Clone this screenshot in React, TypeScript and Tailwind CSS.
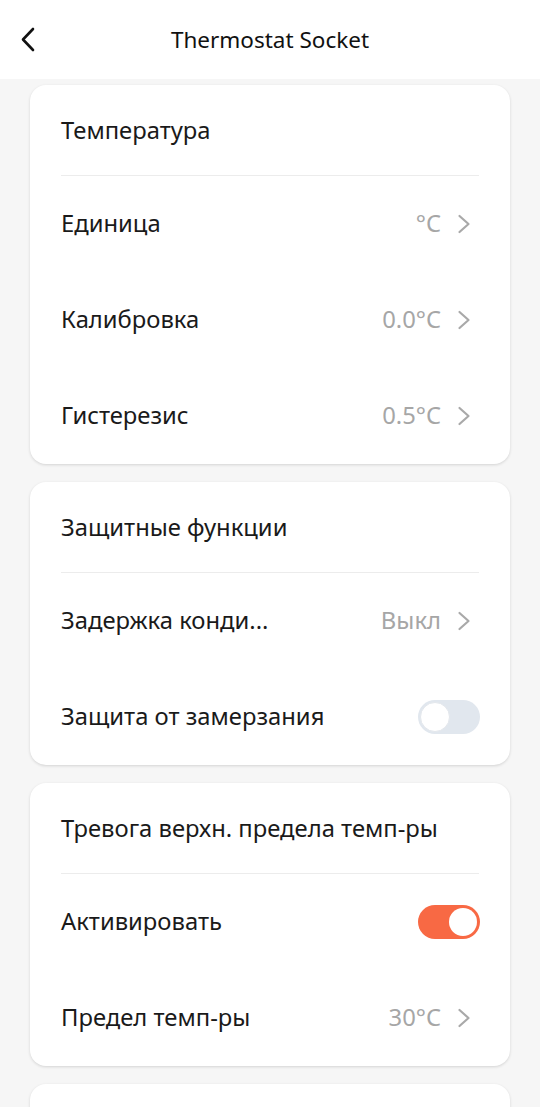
import React from "react";

const font = { fontFamily: '"Noto Sans", "Open Sans", sans-serif' };

function Chevron() {
  return (
    <svg width="14" height="20" viewBox="0 0 14 20" className="ml-[16px] mr-[9px]">
      <path d="M2.5 2 L11.5 10 L2.5 18" fill="none" stroke="#a9a9a9" strokeWidth="2.2" strokeLinecap="round" strokeLinejoin="round" />
    </svg>
  );
}

function Toggle({ on }: { on: boolean }) {
  return on ? (
    <div className="w-[62px] h-[34px] rounded-full bg-[#f86944] flex items-center justify-end pr-[3px]">
      <div className="w-[28px] h-[28px] rounded-full bg-white" />
    </div>
  ) : (
    <div className="w-[62px] h-[34px] rounded-full bg-[#e1e7ee] flex items-center pl-[2px]">
      <div className="w-[30px] h-[30px] rounded-full bg-white border border-[#e3e7ec]" />
    </div>
  );
}

function Title({ children }: { children: React.ReactNode }) {
  return (
    <div className="h-[91px] flex items-center mx-[31px] border-b border-[#ececec] pt-[1px]">
      <span className="text-[23.8px] text-[#1a1a1a] whitespace-nowrap">{children}</span>
    </div>
  );
}

function Row({ label, value, toggle }: { label: string; value?: string; toggle?: boolean }) {
  return (
    <div className="h-[96px] flex items-center justify-between pl-[31px] pr-[30px]">
      <span className="text-[23.8px] text-[#1a1a1a] whitespace-nowrap">{label}</span>
      {toggle === undefined ? (
        <div className="flex items-center">
          <span className="text-[23.8px] text-[#a6a6a6]">{value}</span>
          <Chevron />
        </div>
      ) : (
        <Toggle on={toggle} />
      )}
    </div>
  );
}

function Card({ children }: { children: React.ReactNode }) {
  return (
    <div className="bg-white rounded-[16px] shadow-[0_1px_3px_rgba(0,0,0,0.14)]">{children}</div>
  );
}

export default function App() {
  return (
    <div className="h-[1107px] bg-[#f6f6f6] overflow-hidden" style={font}>
      <div className="h-[79px] bg-white flex items-center relative">
        <svg width="20" height="28" viewBox="0 0 20 28" className="absolute left-[18px] top-[26px]">
          <path d="M15 3 L5 13.5 L15 24" fill="none" stroke="#111" strokeWidth="2.6" strokeLinecap="round" strokeLinejoin="round" />
        </svg>
        <div className="w-full text-center text-[22.5px] text-[#111]">Thermostat Socket</div>
      </div>
      <div className="px-[30px] pt-[6px] flex flex-col gap-[18px]">
        <Card>
          <Title>Температура</Title>
          <Row label="Единица" value="°C" />
          <Row label="Калибровка" value="0.0°C" />
          <Row label="Гистерезис" value="0.5°C" />
        </Card>
        <Card>
          <Title>Защитные функции</Title>
          <Row label="Задержка конди..." value="Выкл" />
          <Row label="Защита от замерзания" toggle={false} />
        </Card>
        <Card>
          <Title>Тревога верхн. предела темп-ры</Title>
          <Row label="Активировать" toggle={true} />
          <Row label="Предел темп-ры" value="30°C" />
        </Card>
        <Card>
          <div className="h-[200px]" />
        </Card>
      </div>
    </div>
  );
}
